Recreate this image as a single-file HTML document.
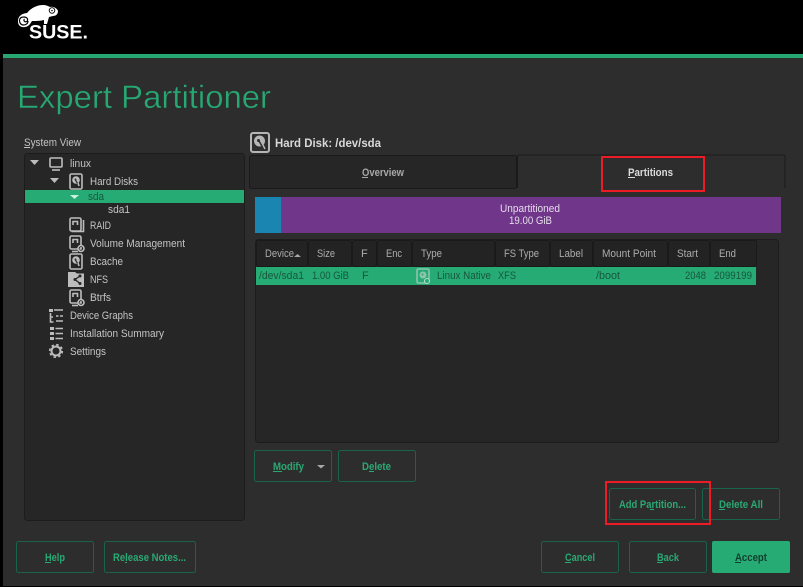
<!DOCTYPE html>
<html><head><meta charset="utf-8"><style>
html,body{margin:0;padding:0;background:#000;width:803px;height:587px;overflow:hidden}
svg{display:block}
text{font-family:"Liberation Sans",sans-serif;font-size:11px;fill:#c8c8c8}
.b{font-weight:bold;fill:#2aa873;font-size:11px}
.t{fill:#c4c4c4;font-size:11px}
.h{fill:#acacac;font-size:11px}
.d{fill:#17573d;font-size:11px}
.bt{fill:#2d2d2d;stroke:#1a634a;stroke-width:1}
.i{fill:none;stroke:#bdbdbd;stroke-width:1.6}
.f{fill:#bdbdbd}
.k{fill:#262626}
.ks{fill:none;stroke:#262626;stroke-width:1.200}
</style></head><body>
<svg width="803" height="587" viewBox="0 0 803 587" xmlns="http://www.w3.org/2000/svg">
<rect width="803" height="587" fill="#000"/>
<rect x="3" y="54" width="800" height="532" fill="#2d2d2d"/>
<rect x="3" y="54" width="800" height="4" fill="#27a873"/>
<!-- logo -->
<path d="M18 21C18 16 22 13.500 27 13 31 8 37 5 43 5 46 5 48 6 50 7 53 6 57 8 58 11 58 14 56 16 53 16L49 17 47 24H44V20C40 21 36 21 32 21L30 24C28 27 24 27.500 22 27 19 26 18 24 18 21Z" fill="#fff"/>
<path d="M28 21c0 2.500-2 4-4.500 4S19.500 23 19.500 20.500 21.500 17 24 17s4 1.500 3.500 3.500c-.3 1.200-1.800 1.700-2.800 1s-1-2-.2-2.500" fill="none" stroke="#000" stroke-width="1.200"/>
<circle cx="52" cy="10.500" r="2.800" fill="none" stroke="#000" stroke-width=".9"/><circle cx="52" cy="10.500" r=".8" fill="#000"/>
<text x="29" y="38.500" textLength="59" lengthAdjust="spacingAndGlyphs" style="font-size:19px;font-weight:bold;fill:#fff">SUSE.</text>
<text x="17" y="108" textLength="254" lengthAdjust="spacingAndGlyphs" style="font-size:32px;fill:#27a873;stroke:#2d2d2d;stroke-width:.4px">Expert Partitioner</text>
<!-- tree -->
<text x="24" y="146" textLength="57" lengthAdjust="spacingAndGlyphs" class="t">System View</text>
<rect x="24" y="147" width="6" height="1" fill="#bdbdbd"/>
<rect x="24.500" y="153.500" width="220" height="367" rx="3" fill="#262626" stroke="#1c1c1c"/>
<rect x="25" y="190" width="219" height="13" fill="#27ab74"/>
<path d="M30 160h9l-4.500 5z" fill="#bdbdbd"/>
<path d="M50 178h9l-4.500 5z" fill="#bdbdbd"/>
<path d="M70 195h9l-4.500 4z" fill="#c8f0dc"/>
<!-- computer -->
<rect x="50" y="158" width="12" height="9" rx="1" class="i"/><path d="M52 170h8" class="i"/>
<!-- hard disks -->
<g><rect x="70" y="174" width="12" height="15" rx="1.500" class="i"/><circle cx="76" cy="180" r="3.800" class="f"/><circle cx="75.500" cy="179.500" r="1" class="k"/><path d="M75.500 180l3 5" class="ks"/><path d="M78 183l1 3" class="i" stroke-width="1"/></g>
<g><rect x="70" y="218" width="11" height="13" rx="1.500" class="i"/><path d="M73 225v-3.500h4.500v3.500" class="i" stroke-width="1.400"/><path d="M83.500 220v11.500h-12" class="i" stroke-width="1"/></g>
<g><rect x="70" y="236" width="11" height="13" rx="1.500" class="i"/><path d="M73 243v-3.500h4.500v3.500" class="i" stroke-width="1.400"/><path d="M72 251.500h6" class="i" stroke-width="1"/><circle cx="81" cy="248.500" r="3.500" class="k"/><circle cx="81" cy="248.500" r="3" class="i" stroke-width="1.200"/><path d="M81 247v2h-1.500" class="i" stroke-width=".8"/></g>
<g><rect x="70" y="254" width="12" height="15" rx="1.500" class="i"/><circle cx="76" cy="260" r="3.800" class="f"/><circle cx="75.500" cy="259.500" r="1" class="k"/><path d="M75.500 260l3 5" class="ks"/><path d="M78 263l1 3" class="i" stroke-width="1"/></g>
<g><path d="M68 272h7l2 1.500h7V287H68z" class="f"/><path d="M80 276l-5 3.500 5 4" fill="none" stroke="#262626" stroke-width="1.300"/><circle cx="80" cy="276" r="1.500" fill="#262626"/><circle cx="80" cy="283.500" r="1.500" fill="#262626"/><circle cx="75" cy="279.500" r="1.500" fill="#262626"/></g>
<g><rect x="70" y="290" width="11" height="13" rx="1.500" class="i"/><path d="M73 297v-3.500h4.500v3.500" class="i" stroke-width="1.400"/><path d="M72 305.500h6" class="i" stroke-width="1"/><circle cx="81" cy="302.500" r="3.500" class="k"/><circle cx="81" cy="302.500" r="3" class="i" stroke-width="1.200"/><path d="M81 301v2h-1.500" class="i" stroke-width=".8"/></g>
<!-- list icons -->
<rect x="49" y="309" width="4" height="3" class="f"/><path d="M54 310h9M50.500 313v9h3M56 316h2.500M60 316h3M56 321h7M51 317h2" class="i" stroke-width="1.100"/>
<path d="M50 327h4v3h-4zM50 332h4v3h-4zM50 337h4v3h-4z" class="f"/><path d="M55.500 328.500h7.500M55.500 333.500h7.500M55.500 338.500h7.500" class="i" stroke-width="1.500"/>
<circle cx="56" cy="351" r="4.500" fill="none" stroke="#bdbdbd" stroke-width="2"/><circle cx="56" cy="351" r="6.300" fill="none" stroke="#bdbdbd" stroke-width="1.600" stroke-dasharray="2.500 2.450"/>
<text x="70" y="167" class="t" textLength="21" lengthAdjust="spacingAndGlyphs">linux</text>
<text x="90" y="185" class="t" textLength="48" lengthAdjust="spacingAndGlyphs">Hard Disks</text>
<text x="88" y="200" class="d" textLength="16" lengthAdjust="spacingAndGlyphs">sda</text>
<text x="108" y="213" class="t" textLength="22" lengthAdjust="spacingAndGlyphs">sda1</text>
<text x="90" y="229" class="t" textLength="21" lengthAdjust="spacingAndGlyphs">RAID</text>
<text x="90" y="247" class="t" textLength="95" lengthAdjust="spacingAndGlyphs">Volume Management</text>
<text x="90" y="265" class="t" textLength="33" lengthAdjust="spacingAndGlyphs">Bcache</text>
<text x="90" y="283" class="t" textLength="18" lengthAdjust="spacingAndGlyphs">NFS</text>
<text x="90" y="301" class="t" textLength="21" lengthAdjust="spacingAndGlyphs">Btrfs</text>
<text x="70" y="319" class="t" textLength="63" lengthAdjust="spacingAndGlyphs">Device Graphs</text>
<text x="70" y="337" class="t" textLength="94" lengthAdjust="spacingAndGlyphs">Installation Summary</text>
<text x="70" y="355" class="t" textLength="36" lengthAdjust="spacingAndGlyphs">Settings</text>
<!-- heading -->
<rect x="251" y="133" width="18" height="19" rx="2" fill="none" stroke="#b5b5b5" stroke-width="2"/>
<circle cx="259.500" cy="141" r="5.500" fill="#b5b5b5"/><circle cx="258.500" cy="140.500" r="1.500" fill="#2d2d2d"/><path d="M259 141l4 7" fill="none" stroke="#2d2d2d" stroke-width="1.500"/><path d="M263 145l2 4" fill="none" stroke="#b5b5b5" stroke-width="1.500"/>
<text x="275" y="147" textLength="106" lengthAdjust="spacingAndGlyphs" style="font-weight:bold;font-size:12px;fill:#d8d8d8">Hard Disk: /dev/sda</text>
<!-- tabs -->
<rect x="249.500" y="155.500" width="267" height="33" rx="2" fill="#262626" stroke="#1a1a1a"/>
<path d="M517.500 188V157q0-2 2-2H783q2 0 2 2V188" fill="#2d2d2d" stroke="#1a1a1a"/>
<text x="362" y="176" textLength="42" lengthAdjust="spacingAndGlyphs" style="font-weight:bold;font-size:11px;fill:#a8a8a8">Overview</text>
<rect x="362" y="177" width="6" height="1" fill="#a8a8a8"/>
<text x="628" y="176" textLength="45" lengthAdjust="spacingAndGlyphs" style="font-weight:bold;font-size:11px;fill:#dcdcdc">Partitions</text>
<rect x="628" y="177" width="7" height="1" fill="#dcdcdc"/>
<rect x="602" y="157" width="102" height="34" fill="none" stroke="#ed1c24" stroke-width="2"/>
<!-- bar -->
<rect x="255" y="197" width="26" height="36" fill="#1a85b0"/>
<rect x="281" y="197" width="500" height="36" fill="#70368a"/>
<text x="500" y="212" textLength="60" lengthAdjust="spacingAndGlyphs" style="fill:#e4dcea">Unpartitioned</text>
<text x="509" y="224" textLength="43" lengthAdjust="spacingAndGlyphs" style="fill:#e4dcea">19.00 GiB</text>
<!-- table -->
<rect x="255.500" y="239.500" width="523" height="203" rx="3" fill="#262626" stroke="#1c1c1c"/>
<g fill="#232323" stroke="#1a1a1a">
<rect x="256.500" y="240.500" width="51" height="26" rx="2"/><rect x="308.500" y="240.500" width="43" height="26" rx="2"/><rect x="352.500" y="240.500" width="24" height="26" rx="2"/><rect x="377.500" y="240.500" width="34" height="26" rx="2"/><rect x="412.500" y="240.500" width="82" height="26" rx="2"/><rect x="495.500" y="240.500" width="54" height="26" rx="2"/><rect x="550.500" y="240.500" width="42" height="26" rx="2"/><rect x="593.500" y="240.500" width="74" height="26" rx="2"/><rect x="668.500" y="240.500" width="41" height="26" rx="2"/><rect x="710.500" y="240.500" width="46" height="26" rx="2"/>
</g>
<text x="265" y="257" class="h" textLength="29" lengthAdjust="spacingAndGlyphs">Device</text><path d="M294 257h7l-3.500-3z" fill="#a8a8a8"/>
<text x="317" y="257" class="h" textLength="18" lengthAdjust="spacingAndGlyphs">Size</text><text x="361" y="257" class="h">F</text><text x="386" y="257" class="h" textLength="16" lengthAdjust="spacingAndGlyphs">Enc</text><text x="421" y="257" class="h" textLength="21" lengthAdjust="spacingAndGlyphs">Type</text><text x="504" y="257" class="h" textLength="35" lengthAdjust="spacingAndGlyphs">FS Type</text><text x="559" y="257" class="h" textLength="24" lengthAdjust="spacingAndGlyphs">Label</text><text x="602" y="257" class="h" textLength="54" lengthAdjust="spacingAndGlyphs">Mount Point</text><text x="677" y="257" class="h" textLength="21" lengthAdjust="spacingAndGlyphs">Start</text><text x="719" y="257" class="h" textLength="17" lengthAdjust="spacingAndGlyphs">End</text>
<rect x="256" y="267" width="500" height="18" fill="#27ab74"/>
<text x="259" y="279" class="d" textLength="45" lengthAdjust="spacingAndGlyphs">/dev/sda1</text><text x="312" y="279" class="d" textLength="37" lengthAdjust="spacingAndGlyphs">1.00 GiB</text><text x="362" y="279" class="d">F</text>
<text x="437" y="279" class="d" textLength="54" lengthAdjust="spacingAndGlyphs">Linux Native</text><text x="498" y="279" class="d" textLength="18" lengthAdjust="spacingAndGlyphs">XFS</text><text x="596" y="279" class="d" textLength="24" lengthAdjust="spacingAndGlyphs">/boot</text><text x="685" y="279" class="d" textLength="21" lengthAdjust="spacingAndGlyphs">2048</text><text x="714" y="279" class="d" textLength="38" lengthAdjust="spacingAndGlyphs">2099199</text>
<rect x="417" y="269" width="12" height="14" rx="1.500" fill="none" stroke="#8cc4ae" stroke-width="1.600"/><circle cx="423" cy="275" r="3.500" fill="#8cc4ae"/><circle cx="422.500" cy="274.500" r="1" fill="#27ab74"/><circle cx="427" cy="281" r="3" fill="#27ab74"/><circle cx="427" cy="281" r="2.500" fill="none" stroke="#b5dccb" stroke-width="1.100"/>
<!-- buttons -->
<rect x="254.500" y="450.500" width="77" height="31" rx="2" class="bt"/>
<rect x="338.500" y="450.500" width="77" height="31" rx="2" class="bt"/>
<rect x="609.500" y="488.500" width="86" height="31" rx="2" class="bt"/>
<rect x="702.500" y="488.500" width="77" height="31" rx="2" class="bt"/>
<rect x="16.500" y="541.500" width="77" height="31" rx="2" class="bt"/>
<rect x="104.500" y="541.500" width="91" height="31" rx="2" class="bt"/>
<rect x="541.500" y="541.500" width="77" height="31" rx="2" class="bt"/>
<rect x="629.500" y="541.500" width="77" height="31" rx="2" class="bt"/>
<rect x="712" y="541" width="78" height="32" rx="2" fill="#27ab74"/>
<text x="273" y="470" class="b" textLength="31" lengthAdjust="spacingAndGlyphs">Modify</text><rect x="273" y="471" width="9" height="1" fill="#2aa873"/>
<path d="M317 465h8l-4 3.500z" fill="#a8a8a8"/>
<text x="362" y="470" class="b" textLength="29" lengthAdjust="spacingAndGlyphs">Delete</text><rect x="369" y="471" width="5" height="1" fill="#2aa873"/>
<text x="619" y="508" class="b" textLength="67" lengthAdjust="spacingAndGlyphs">Add Partition...</text><rect x="650" y="509" width="4" height="1" fill="#2aa873"/>
<text x="719" y="508" class="b" textLength="44" lengthAdjust="spacingAndGlyphs">Delete All</text><rect x="719" y="509" width="6" height="1" fill="#2aa873"/>
<text x="45" y="561" class="b" textLength="20" lengthAdjust="spacingAndGlyphs">Help</text><rect x="45" y="562" width="6" height="1" fill="#2aa873"/>
<text x="113" y="561" class="b" textLength="73" lengthAdjust="spacingAndGlyphs">Release Notes...</text><rect x="125" y="562" width="2" height="1" fill="#2aa873"/>
<text x="565" y="561" class="b" textLength="30" lengthAdjust="spacingAndGlyphs">Cancel</text><rect x="565" y="562" width="6" height="1" fill="#2aa873"/>
<text x="657" y="561" class="b" textLength="22" lengthAdjust="spacingAndGlyphs">Back</text><rect x="657" y="562" width="6" height="1" fill="#2aa873"/>
<text x="735" y="561" textLength="32" lengthAdjust="spacingAndGlyphs" style="font-weight:bold;font-size:11px;fill:#123f2d">Accept</text><rect x="735" y="562" width="6" height="1" fill="#123f2d"/>
<rect x="606" y="482" width="104" height="42" fill="none" stroke="#ed1c24" stroke-width="2"/>
</svg>
</body></html>
